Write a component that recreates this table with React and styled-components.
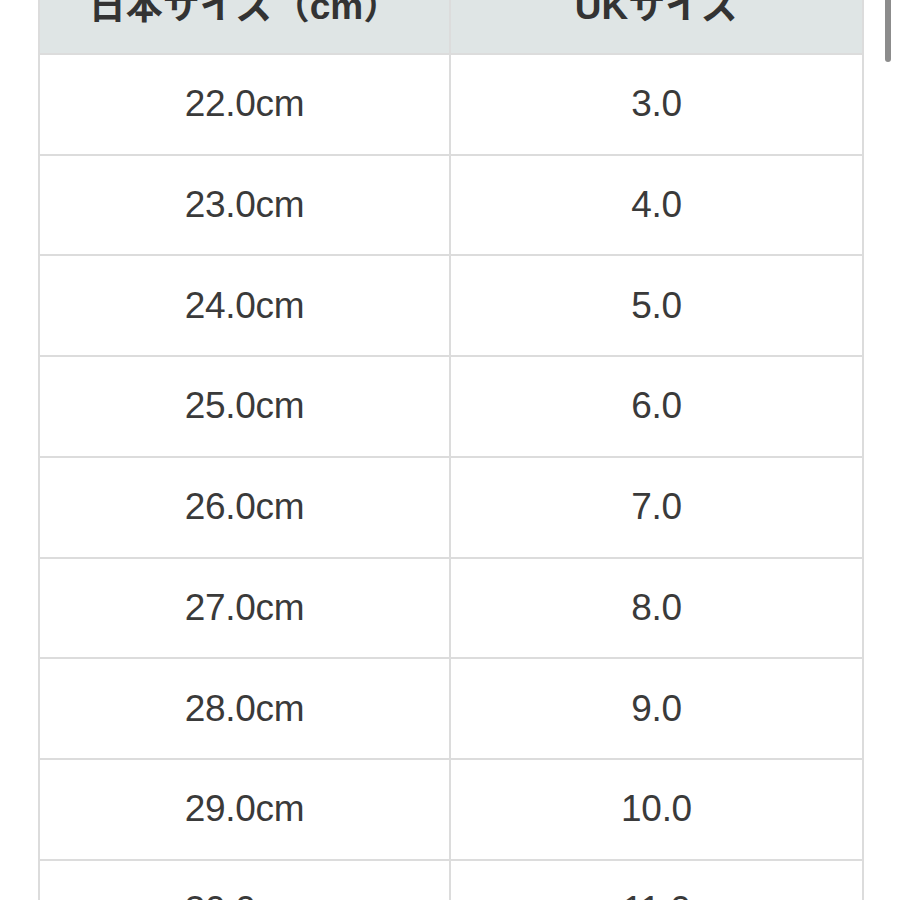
import React from 'react';
import styled, { createGlobalStyle } from 'styled-components';

const GlobalStyle = createGlobalStyle`
  html, body {
    margin: 0;
    padding: 0;
    background: #fff;
    overflow: hidden;
    height: 900px;
  }
  body {
    font-family: "Liberation Sans", "Noto Sans CJK JP", Arial, sans-serif;
  }
`;

const sizes = [
  ['22.0cm', '3.0'],
  ['23.0cm', '4.0'],
  ['24.0cm', '5.0'],
  ['25.0cm', '6.0'],
  ['26.0cm', '7.0'],
  ['27.0cm', '8.0'],
  ['28.0cm', '9.0'],
  ['29.0cm', '10.0'],
  ['30.0cm', '11.0'],
];

const Page = styled.div`
  position: relative;
  width: 900px;
  height: 900px;
  overflow: hidden;
`;

const Table = styled.div`
  margin: -46px 0 0 38px;
  width: 824px;
  display: grid;
  grid-template-columns: 411px 413px;
  border-left: 2px solid #dcdcdc;
  box-sizing: border-box;
`;

const Cell = styled.div`
  height: 100.75px;
  box-sizing: border-box;
  border-right: 2px solid #dcdcdc;
  border-bottom: 2px solid #dcdcdc;
  display: flex;
  align-items: center;
  justify-content: center;
  font-size: 37px;
  color: ${(p) => (p.$head ? '#333' : '#3a3a3a')};
  background: ${(p) => (p.$head ? '#dfe5e5' : '#fff')};
  font-weight: ${(p) => (p.$head ? 700 : 400)};
  letter-spacing: ${(p) => (p.$head ? '0' : '-0.3px')};
`;

const Scrollbar = styled.div`
  position: absolute;
  top: -6px;
  right: 9px;
  width: 6px;
  height: 68px;
  border-radius: 3px;
  background: #8c8c8c;
`;

const App = () => {
  return (
    <Page>
      <GlobalStyle />
      <Table>
        <Cell $head>日本サイズ（cm）</Cell>
        <Cell $head>UKサイズ</Cell>
        {sizes.map(([jp, uk]) => (
          <React.Fragment key={jp}>
            <Cell>{jp}</Cell>
            <Cell>{uk}</Cell>
          </React.Fragment>
        ))}
      </Table>
      <Scrollbar />
    </Page>
  );
};

export default App;
